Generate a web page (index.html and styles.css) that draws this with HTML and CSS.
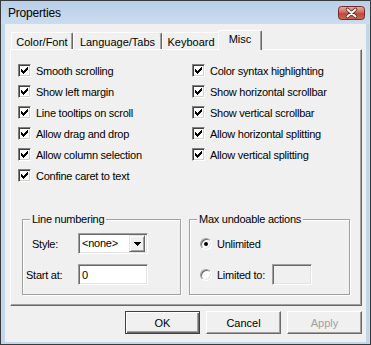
FILE: index.html
```html
<!DOCTYPE html>
<html>
<head>
<meta charset="utf-8">
<link rel="stylesheet" href="styles.css">
</head>
<body>
<div class="window">
  <div class="titlebar">
    <span class="title">Properties</span>
    <svg class="close" width="27" height="14" viewBox="0 0 27 14">
      <defs>
        <linearGradient id="cg" x1="0" y1="0" x2="0" y2="1">
          <stop offset="0" stop-color="#eab2a6"/>
          <stop offset="0.45" stop-color="#d2675c"/>
          <stop offset="0.55" stop-color="#c2463b"/>
          <stop offset="1" stop-color="#cf6a56"/>
        </linearGradient>
      </defs>
      <rect x="0.5" y="0.5" width="26" height="13" rx="3" fill="url(#cg)" stroke="#6e2b27"/>
      <path d="M9.5 3.5 L17.5 10.5 M17.5 3.5 L9.5 10.5" stroke="#5a1f1b" stroke-width="3.6" stroke-linecap="round"/>
      <path d="M9.5 3.5 L17.5 10.5 M17.5 3.5 L9.5 10.5" stroke="#ffffff" stroke-width="2" stroke-linecap="round"/>
    </svg>
  </div>
  <div class="client">
    <div class="tabs">
      <div class="tab tab-color">Color/Font</div>
      <div class="tab tab-lang">Language/Tabs</div>
      <div class="tab tab-key">Keyboard</div>
      <div class="tab tab-misc selected">Misc</div>
    </div>
    <div class="panel">
      <div class="checks">
        <div class="col col-left">
          <label class="check"><span class="box"><svg width="7" height="7" viewBox="0 0 7 7" shape-rendering="crispEdges"><path d="M0 2h1v3h-1z M1 3h1v3h-1z M2 4h1v3h-1z M3 3h1v3h-1z M4 2h1v3h-1z M5 1h1v3h-1z M6 0h1v3h-1z"/></svg></span>Smooth scrolling</label>
          <label class="check"><span class="box"><svg width="7" height="7" viewBox="0 0 7 7" shape-rendering="crispEdges"><path d="M0 2h1v3h-1z M1 3h1v3h-1z M2 4h1v3h-1z M3 3h1v3h-1z M4 2h1v3h-1z M5 1h1v3h-1z M6 0h1v3h-1z"/></svg></span>Show left margin</label>
          <label class="check"><span class="box"><svg width="7" height="7" viewBox="0 0 7 7" shape-rendering="crispEdges"><path d="M0 2h1v3h-1z M1 3h1v3h-1z M2 4h1v3h-1z M3 3h1v3h-1z M4 2h1v3h-1z M5 1h1v3h-1z M6 0h1v3h-1z"/></svg></span>Line tooltips on scroll</label>
          <label class="check"><span class="box"><svg width="7" height="7" viewBox="0 0 7 7" shape-rendering="crispEdges"><path d="M0 2h1v3h-1z M1 3h1v3h-1z M2 4h1v3h-1z M3 3h1v3h-1z M4 2h1v3h-1z M5 1h1v3h-1z M6 0h1v3h-1z"/></svg></span>Allow drag and drop</label>
          <label class="check"><span class="box"><svg width="7" height="7" viewBox="0 0 7 7" shape-rendering="crispEdges"><path d="M0 2h1v3h-1z M1 3h1v3h-1z M2 4h1v3h-1z M3 3h1v3h-1z M4 2h1v3h-1z M5 1h1v3h-1z M6 0h1v3h-1z"/></svg></span>Allow column selection</label>
          <label class="check"><span class="box"><svg width="7" height="7" viewBox="0 0 7 7" shape-rendering="crispEdges"><path d="M0 2h1v3h-1z M1 3h1v3h-1z M2 4h1v3h-1z M3 3h1v3h-1z M4 2h1v3h-1z M5 1h1v3h-1z M6 0h1v3h-1z"/></svg></span>Confine caret to text</label>
        </div>
        <div class="col col-right">
          <label class="check"><span class="box"><svg width="7" height="7" viewBox="0 0 7 7" shape-rendering="crispEdges"><path d="M0 2h1v3h-1z M1 3h1v3h-1z M2 4h1v3h-1z M3 3h1v3h-1z M4 2h1v3h-1z M5 1h1v3h-1z M6 0h1v3h-1z"/></svg></span>Color syntax highlighting</label>
          <label class="check"><span class="box"><svg width="7" height="7" viewBox="0 0 7 7" shape-rendering="crispEdges"><path d="M0 2h1v3h-1z M1 3h1v3h-1z M2 4h1v3h-1z M3 3h1v3h-1z M4 2h1v3h-1z M5 1h1v3h-1z M6 0h1v3h-1z"/></svg></span>Show horizontal scrollbar</label>
          <label class="check"><span class="box"><svg width="7" height="7" viewBox="0 0 7 7" shape-rendering="crispEdges"><path d="M0 2h1v3h-1z M1 3h1v3h-1z M2 4h1v3h-1z M3 3h1v3h-1z M4 2h1v3h-1z M5 1h1v3h-1z M6 0h1v3h-1z"/></svg></span>Show vertical scrollbar</label>
          <label class="check"><span class="box"><svg width="7" height="7" viewBox="0 0 7 7" shape-rendering="crispEdges"><path d="M0 2h1v3h-1z M1 3h1v3h-1z M2 4h1v3h-1z M3 3h1v3h-1z M4 2h1v3h-1z M5 1h1v3h-1z M6 0h1v3h-1z"/></svg></span>Allow horizontal splitting</label>
          <label class="check"><span class="box"><svg width="7" height="7" viewBox="0 0 7 7" shape-rendering="crispEdges"><path d="M0 2h1v3h-1z M1 3h1v3h-1z M2 4h1v3h-1z M3 3h1v3h-1z M4 2h1v3h-1z M5 1h1v3h-1z M6 0h1v3h-1z"/></svg></span>Allow vertical splitting</label>
        </div>
      </div>
      <div class="groups">
        <fieldset class="group group-left">
          <legend>Line numbering</legend>
          <div class="form">
            <span class="lbl lbl-style">Style:</span>
            <div class="combo"><span class="combo-text">&lt;none&gt;</span><span class="drop"><svg width="7" height="4" viewBox="0 0 7 4" shape-rendering="crispEdges"><path d="M0 0h7v1h-7z M1 1h5v1h-5z M2 2h3v1h-3z M3 3h1v1h-1z"/></svg></span></div>
            <span class="lbl lbl-start">Start at:</span>
            <div class="textbox"><span class="tb-text">0</span></div>
          </div>
        </fieldset>
        <fieldset class="group group-right">
          <legend>Max undoable actions</legend>
          <div class="radios">
            <div class="radio-row"><span class="radio"><span class="dot"></span></span>Unlimited</div>
            <div class="radio-row"><span class="radio"></span>Limited to:<div class="textbox disabled small"></div></div>
          </div>
        </fieldset>
      </div>
    </div>
    <div class="buttons">
      <div class="btn default">OK</div>
      <div class="btn">Cancel</div>
      <div class="btn disabled">Apply</div>
    </div>
  </div>
</div>
</body>
</html>
```
FILE: styles.css
```css
html, body {
  margin: 0;
  padding: 0;
  background: #f0f0f0;
}
body {
  font-family: "Liberation Sans", Arial, sans-serif;
  font-size: 11px;
  color: #000;
}
.window {
  width: 371px;
  height: 345px;
  box-sizing: border-box;
  border: 1px solid #3a3a3a;
  background: #c3d7ec;
  display: flex;
  flex-direction: column;
}
.titlebar {
  height: 23px;
  flex: none;
  display: flex;
  align-items: center;
  justify-content: space-between;
  padding: 0 5px 0 7px;
  background: linear-gradient(#b8d0e9, #cbdcef);
}
.title {
  font-size: 12px;
  line-height: 14px;
  color: #000;
  letter-spacing: -0.2px;
}
.close {
  display: block;
  margin-top: 1px;
}
.client {
  flex: 1;
  margin: 0 4px 2px 4px;
  background: #f0f0f0;
  padding: 6px 4px 0 5px;
  display: flex;
  flex-direction: column;
}
.tabs {
  display: flex;
  align-items: flex-start;
  height: 20px;
  margin: 0 0 -1px 1px;
  position: relative;
  z-index: 1;
}
.tab {
  box-sizing: border-box;
  height: 17px;
  margin-top: 2px;
  padding-top: 3px;
  line-height: 13px;
  text-align: center;
  background: #f0f0f0;
  border-left: 1px solid #ffffff;
  border-top: 1px solid #ffffff;
  border-right: 1px solid #696969;
  box-shadow: inset -1px 0 #a0a0a0;
  border-radius: 2px 2px 0 0;
}
.tab-color { width: 62px; }
.tab-lang { width: 89px; }
.tab-key { width: 58px; }
.tab-misc { width: 44px; }
.tab.selected {
  height: 20px;
  margin: 0 -2px 0 -2px;
  padding-top: 2px;
  position: relative;
  z-index: 2;
}
.panel {
  box-sizing: border-box;
  width: 352px;
  height: 257px;
  border-left: 1px solid #ffffff;
  border-top: 1px solid #ffffff;
  border-right: 1px solid #696969;
  border-bottom: 1px solid #696969;
  box-shadow: inset -1px -1px #a0a0a0;
  letter-spacing: -0.25px;
}
.checks {
  display: flex;
  padding: 10px 0 0 7px;
}
.col {
  display: flex;
  flex-direction: column;
}
.col-left { width: 174px; }
.check {
  height: 21px;
  display: flex;
  align-items: center;
  gap: 5px;
  white-space: nowrap;
}
.box {
  box-sizing: border-box;
  width: 13px;
  height: 13px;
  flex: none;
  background: #fff;
  border-style: solid;
  border-width: 1px;
  border-color: #808080 #ffffff #ffffff #808080;
  box-shadow: inset 1px 1px #404040, inset -1px -1px #d4d0c8;
}
.box svg {
  display: block;
  margin: 2px 0 0 2px;
}
.groups {
  display: flex;
  gap: 8px;
  margin: 27px 0 0 11px;
}
.group {
  margin: 0;
  padding: 8px 0 9px 0;
  border: 1px solid #a0a0a0;
  box-shadow: 1px 1px #ffffff, inset 1px 1px #ffffff;
  min-width: 0;
}
.group-left { width: 159px; box-sizing: border-box; }
.group-right { width: 161px; box-sizing: border-box; }
.group legend {
  margin-left: 7px;
  padding: 0 2px;
  line-height: 12px;
  background: #f0f0f0;
}
.form {
  display: grid;
  grid-template-columns: 55px 70px;
  grid-template-rows: 21px 21px;
  row-gap: 10px;
  align-items: center;
}
.lbl-style { margin-left: 9px; }
.lbl-start { margin-left: 3px; }
.combo, .textbox {
  box-sizing: border-box;
  height: 21px;
  background: #fff;
  border-style: solid;
  border-width: 1px;
  border-color: #a0a0a0 #ffffff #ffffff #a0a0a0;
  box-shadow: inset 1px 1px #696969, inset -1px -1px #e3e3e3;
  display: flex;
  align-items: center;
}
.combo {
  padding: 0 2px 0 3px;
  justify-content: space-between;
}
.combo-text { line-height: 13px; }
.drop {
  box-sizing: border-box;
  width: 16px;
  height: 17px;
  background: #f0f0f0;
  border-style: solid;
  border-width: 1px;
  border-color: #e3e3e3 #696969 #696969 #e3e3e3;
  box-shadow: inset 1px 1px #ffffff, inset -1px -1px #a0a0a0;
  display: flex;
  align-items: center;
  justify-content: center;
}
.drop svg { display: block; }
.tb-text { padding-left: 3px; }
.radios {
  display: flex;
  flex-direction: column;
  gap: 10px;
  padding-left: 10px;
}
.radio-row {
  height: 21px;
  display: flex;
  align-items: center;
  gap: 5px;
  white-space: nowrap;
}
.radio {
  box-sizing: border-box;
  width: 12px;
  height: 12px;
  border-radius: 50%;
  background: #fff;
  border-style: solid;
  border-width: 1px;
  border-color: #a0a0a0 #ffffff #ffffff #a0a0a0;
  box-shadow: inset 1px 1px #696969, inset -1px -1px #e3e3e3;
  display: flex;
  align-items: center;
  justify-content: center;
  flex: none;
}
.dot {
  width: 4px;
  height: 4px;
  border-radius: 50%;
  background: #000;
}
.textbox.small {
  width: 40px;
  margin-left: 2px;
}
.textbox.disabled {
  background: #f0f0f0;
}
.buttons {
  display: flex;
  justify-content: flex-end;
  gap: 6px;
  margin-top: 5px;
}
.btn {
  box-sizing: border-box;
  width: 75px;
  height: 23px;
  display: flex;
  align-items: center;
  justify-content: center;
  background: #f0f0f0;
  border-style: solid;
  border-width: 1px;
  border-color: #ffffff #696969 #696969 #ffffff;
  box-shadow: inset -1px -1px #a0a0a0;
}
.btn.default {
  border-color: #404040;
  box-shadow: inset 1px 1px #ffffff, inset -1px -1px #696969, inset -2px -2px #a0a0a0;
}
.btn.disabled {
  color: #a0a0a0;
}
```
